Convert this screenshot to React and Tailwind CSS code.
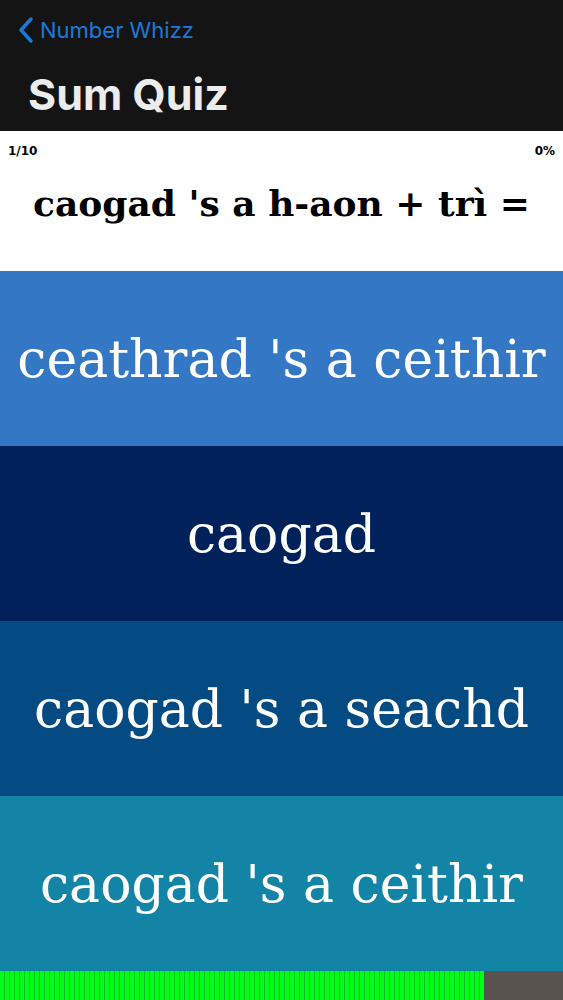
import React from "react";

const answers = [
  { text: "ceathrad 's a ceithir", bg: "bg-[#3477c5]" },
  { text: "caogad", bg: "bg-[#00215a]" },
  { text: "caogad 's a seachd", bg: "bg-[#034b82]" },
  { text: "caogad 's a ceithir", bg: "bg-[#1384a6]" },
];

export default function App() {
  return (
    <div className="w-[563px] h-[1000px] flex flex-col bg-white overflow-hidden">
      <div className="h-[131px] bg-[#141414] flex flex-col px-[16px]">
        <div className="flex items-center mt-[14px] h-[32px] text-[#1b7ad9]">
          <svg width="20" height="28" viewBox="0 0 20 28" fill="none">
            <path d="M15 3 L5 14 L15 25" stroke="currentColor" strokeWidth="3.5" strokeLinecap="round" strokeLinejoin="round" />
          </svg>
          <span className="ml-[4px] text-[22px] font-['Inter',sans-serif]">Number Whizz</span>
        </div>
        <div className="mt-[27px] ml-[12px] text-[43px] font-bold text-[#ececec] leading-none font-['Inter',sans-serif]">
          Sum Quiz
        </div>
      </div>
      <div className="h-[140px] flex flex-col">
        <div className="flex justify-between px-[8px] pt-[14px] text-[12px] font-bold font-['DejaVu_Sans',sans-serif] leading-none">
          <span>1/10</span>
          <span>0%</span>
        </div>
        <div className="flex-1 flex items-center justify-center pb-[22px] text-[36px] font-bold font-['DejaVu_Serif',serif] whitespace-nowrap">
          caogad 's a h-aon + trì =
        </div>
      </div>
      {answers.map((a) => (
        <div
          key={a.text}
          className={`h-[175px] flex items-center justify-center text-white text-[52px] font-['DejaVu_Serif',serif] whitespace-nowrap ${a.bg}`}
        >
          {a.text}
        </div>
      ))}
      <div className="flex-1 flex">
        <div className="w-[484px] bg-[repeating-linear-gradient(90deg,#00ff16_0px,#00ff16_4px,#10c020_4px,#10c020_5px)]" />
        <div className="flex-1 bg-[#595350]" />
      </div>
    </div>
  );
}
